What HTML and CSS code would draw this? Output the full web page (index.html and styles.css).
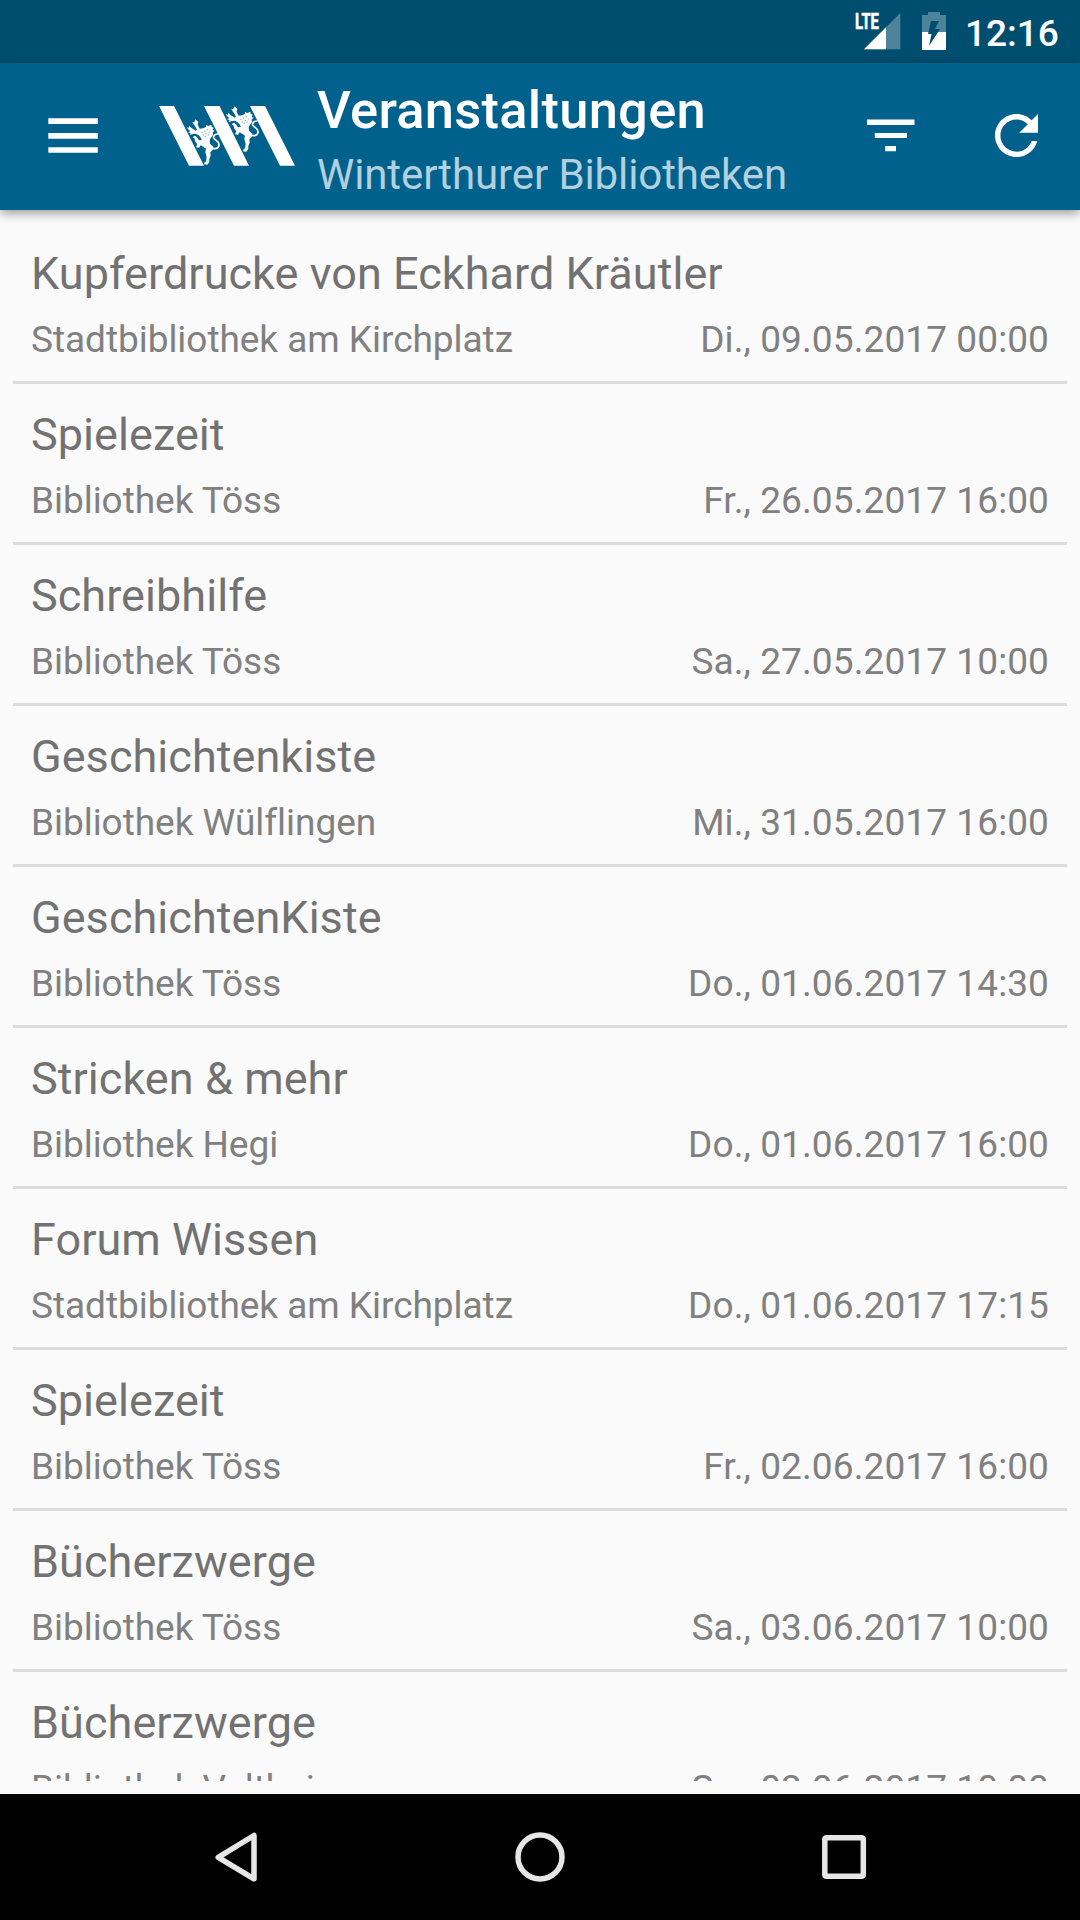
FILE: index.html
```html
<!DOCTYPE html>
<html lang="de">
<head>
<meta charset="utf-8">
<title>Veranstaltungen</title>
<link rel="stylesheet" href="styles.css">
</head>
<body>
<div class="status">
  <svg class="signal" width="46" height="38" viewBox="855 12 46 38">
    <path d="M864 49.300L900.300 13V49.300Z" fill="#4d849b"/>
    <path d="M864 49.300L886 27.300V49.300Z" fill="#fff"/>
    <text class="lte" x="855" y="29.300" textLength="24" lengthAdjust="spacingAndGlyphs">LTE</text>
  </svg>
  <svg class="battery" width="24" height="38" viewBox="0 0 24 38">
    <path d="M0 3H6V0H18V3H24V20H0Z" fill="#4d849b"/>
    <path d="M0 20H24V38H0Z" fill="#fff"/>
    <path d="M9 9H17L13 17H18L7 34L9.500 22H6Z" fill="#004e6f"/>
  </svg>
  <span class="clock">12:16</span>
</div>
<header class="toolbar">
  <svg class="menu" width="50" height="36" viewBox="0 0 50 36" fill="#fff">
    <path d="M.3 .3H49.800V6H.3ZM.3 15H49.800V20.700H.3ZM.3 29.200H49.800V34.800H.3Z"/>
  </svg>
  <svg class="logo" width="137" height="60" viewBox="159 106 137 60" fill="#fff">
    <path d="M159 106H174L204 165.700H189ZM204 106H219.500L249 165.700H234ZM250 106H265L295 165.700H280Z"/>
    <g id="lion" transform="translate(184 102) scale(.3333)">
      <path d="M34 52L39 56L43 60L41 68L47 80L58 79L66 74L66 69L73 72L82 68L83 74L89 77L86 83L92 87L86 91L88 98L82 106L77 114L78 125L88 134L87 143L79 151L80 162L76 170L76 180L70 188L60 187L62 181L66 178L68 165L64 150L66 140L58 134L50 130L45 137L36 136L40 127L34 119L32 110L26 105L33 101L39 106L45 115L54 113L49 105L44 100L35 95L27 96L17 99L20 93L12 91L19 87L12 82L9 76L15 77L16 71L22 78L36 86L39 83L33 72L27 64L25 59L31 61Z"/>
      <path d="M82 136C90 143 103 141 105 130C107 117 92 115 89 108C87 102 94 95 103 96" fill="none" stroke="#fff" stroke-width="5"/>
      <path d="M52 91h4M60 87h4M68 83h4M56 99h4M65 95h4M74 90h4M62 103h4M71 99h4" stroke="#00618c" stroke-width="2.500" opacity=".6"/>
    </g>
    <use href="#lion" x="39" y="-13"/>
  </svg>
  <div class="titles">
    <h1 class="title">Veranstaltungen</h1>
    <div class="subtitle">Winterthurer Bibliotheken</div>
  </div>
  <svg class="filter" width="48" height="33" viewBox="0 0 48 33" fill="#fff">
    <path d="M0 .5H47.500V6H0ZM7.800 14H40V19H7.800ZM18.200 27H29V32.300H18.200Z"/>
  </svg>
  <svg class="refresh" width="43" height="43" viewBox="4 4 16 16" fill="#fff">
    <path d="M17.650 6.350C16.200 4.900 14.210 4 12 4c-4.420 0-7.990 3.580-7.990 8s3.570 8 7.990 8c3.730 0 6.840-2.550 7.730-6h-2.080c-.82 2.330-3.040 4-5.650 4-3.310 0-6-2.690-6-6s2.690-6 6-6c1.660 0 3.140.69 4.220 1.780L13 11h7V4l-2.350 2.350z"/>
  </svg>
</header>
<main class="list">
  <article class="item"><h2 class="name">Kupferdrucke von Eckhard Kräutler</h2><div class="meta"><span>Stadtbibliothek am Kirchplatz</span><time>Di., 09.05.2017 00:00</time></div></article>
  <article class="item"><h2 class="name">Spielezeit</h2><div class="meta"><span>Bibliothek Töss</span><time>Fr., 26.05.2017 16:00</time></div></article>
  <article class="item"><h2 class="name">Schreibhilfe</h2><div class="meta"><span>Bibliothek Töss</span><time>Sa., 27.05.2017 10:00</time></div></article>
  <article class="item"><h2 class="name">Geschichtenkiste</h2><div class="meta"><span>Bibliothek Wülflingen</span><time>Mi., 31.05.2017 16:00</time></div></article>
  <article class="item"><h2 class="name">GeschichtenKiste</h2><div class="meta"><span>Bibliothek Töss</span><time>Do., 01.06.2017 14:30</time></div></article>
  <article class="item"><h2 class="name">Stricken &amp; mehr</h2><div class="meta"><span>Bibliothek Hegi</span><time>Do., 01.06.2017 16:00</time></div></article>
  <article class="item"><h2 class="name">Forum Wissen</h2><div class="meta"><span>Stadtbibliothek am Kirchplatz</span><time>Do., 01.06.2017 17:15</time></div></article>
  <article class="item"><h2 class="name">Spielezeit</h2><div class="meta"><span>Bibliothek Töss</span><time>Fr., 02.06.2017 16:00</time></div></article>
  <article class="item"><h2 class="name">Bücherzwerge</h2><div class="meta"><span>Bibliothek Töss</span><time>Sa., 03.06.2017 10:00</time></div></article>
  <article class="item"><h2 class="name">Bücherzwerge</h2><div class="meta"><span>Bibliothek Veltheim</span><time>Sa., 03.06.2017 10:00</time></div></article>
</main>
<nav class="navbar">
  <svg width="50" height="50" viewBox="0 0 50 50"><path d="M7.200 25.300L43 3.500V46.800Z"/></svg>
  <svg width="50" height="50" viewBox="0 0 50 50"><circle cx="25" cy="25" r="22"/></svg>
  <svg width="50" height="50" viewBox="0 0 50 50"><rect x="5.800" y="5.800" width="38.500" height="38.500" rx="1.500"/></svg>
</nav>
</body>
</html>
```
FILE: styles.css
```css
* { box-sizing: border-box; }
body {
  margin: 0;
  width: 1080px;
  height: 1920px;
  display: flex;
  flex-direction: column;
  overflow: hidden;
  background: #fafafa;
  font-family: Roboto, sans-serif;
}
h1, h2 { margin: 0; font-weight: 400; }
svg { display: block; flex: none; }

.status {
  height: 63px;
  flex: none;
  display: flex;
  align-items: flex-start;
  justify-content: flex-end;
  padding: 12px 21px 0 0;
  background: #004e6f;
  color: #fff;
}
.signal { overflow: visible; }
.lte { font-size: 22px; font-weight: 700; fill: #fff; stroke: #fff; stroke-width: .6px; }
.battery { margin-left: 21px; }
.clock {
  width: 94px;
  margin-left: 19px;
  font-size: 37px;
  line-height: 43px;
  font-weight: 500;
  white-space: nowrap;
}

.toolbar {
  height: 147px;
  flex: none;
  display: flex;
  align-items: flex-start;
  position: relative;
  padding-left: 48px;
  background: #00618c;
  box-shadow: 0 3px 10px rgba(0, 0, 0, .4);
}
.menu { margin-top: 55px; }
.logo { margin: 43px 0 0 61px; }
.titles { width: 549px; margin: 16px 0 0 21px; white-space: nowrap; }
.title { font-size: 52.500px; line-height: 62px; font-weight: 500; letter-spacing: .25px; color: #fff; }
.subtitle { margin-top: 9px; font-size: 42px; line-height: 50px; letter-spacing: -.1px; color: #b2d0dd; }
.filter { margin: 56px 0 0 1px; }
.refresh { margin: 51px 0 0 80px; }

.list {
  height: 1571px;
  flex: none;
  margin: 0 13px;
  padding-top: 13px;
  overflow: hidden;
}
.item {
  height: 161px;
  padding: 24px 18px 0;
  border-bottom: 3px solid #dbdbdb;
  white-space: nowrap;
}
.name { font-size: 45px; line-height: 53px; letter-spacing: .05px; color: #727272; }
.meta {
  display: flex;
  justify-content: space-between;
  margin-top: 18px;
  font-size: 37px;
  line-height: 44px;
  color: #808080;
}
.meta span { letter-spacing: -.04px; }
.meta time { letter-spacing: .1px; }

.navbar {
  height: 126px;
  flex: none;
  display: flex;
  justify-content: center;
  align-items: center;
  gap: 254px;
  margin-top: 13px;
  background: #000;
}
.navbar svg { fill: none; stroke: #e6e6e6; stroke-width: 5.500; stroke-linejoin: round; }
```
